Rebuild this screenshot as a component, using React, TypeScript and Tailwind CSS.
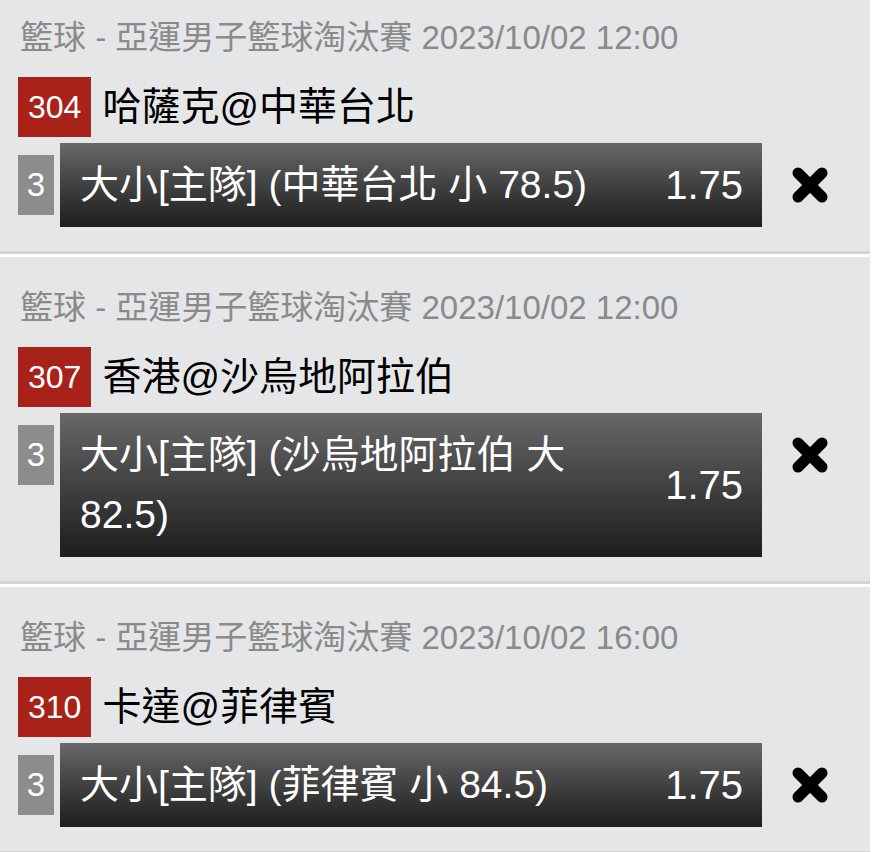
import React from 'react';

type Bet = {
  no: string;
  header: string;
  match: string;
  leg: string;
  pick: string;
  odds: string;
};

const bets: Bet[] = [
  {
    no: '304',
    header: '籃球 - 亞運男子籃球淘汰賽 2023/10/02 12:00',
    match: '哈薩克@中華台北',
    leg: '3',
    pick: '大小[主隊] (中華台北 小 78.5)',
    odds: '1.75',
  },
  {
    no: '307',
    header: '籃球 - 亞運男子籃球淘汰賽 2023/10/02 12:00',
    match: '香港@沙烏地阿拉伯',
    leg: '3',
    pick: '大小[主隊] (沙烏地阿拉伯 大 82.5)',
    odds: '1.75',
  },
  {
    no: '310',
    header: '籃球 - 亞運男子籃球淘汰賽 2023/10/02 16:00',
    match: '卡達@菲律賓',
    leg: '3',
    pick: '大小[主隊] (菲律賓 小 84.5)',
    odds: '1.75',
  },
];

function CloseIcon() {
  return (
    <svg width="36" height="36" viewBox="0 0 36 36">
      <path d="M6 6 L30 30 M30 6 L6 30" stroke="#000" strokeWidth="11" strokeLinecap="round" />
    </svg>
  );
}

function BetCard({ bet, first }: { bet: Bet; first: boolean }) {
  return (
    <div className="mb-[3px]">
      <div
        className={`w-[870px] bg-[#e5e6e8] border-b-[3px] border-[#d3d4d6] pl-[18px] pb-[24px] ${
          first ? 'pt-[20px]' : 'pt-[33px]'
        }`}
      >
        <div className="text-[33px] leading-[36px] text-[#8a8a8a] pl-[2px]">{bet.header}</div>
        <div className="mt-[21px] flex items-center gap-[11px]">
          <div className="h-[60px] px-[10px] bg-[#a8221a] text-white text-[32px] flex items-center">
            {bet.no}
          </div>
          <div className="text-[39px] leading-[60px] text-black">{bet.match}</div>
        </div>
        <div className="mt-[6px] flex items-start">
          <div className="mt-[12px] w-[36px] h-[60px] bg-[#8c8c8c] text-white text-[33px] flex items-center justify-center">
            {bet.leg}
          </div>
          <div className="ml-[6px] w-[702px] bg-linear-to-b from-[#686868] to-[#1e1e1e] flex items-center py-[12px] pl-[20px] pr-[19px] text-white">
            <div className="flex-1 text-[39px] leading-[60px]">{bet.pick}</div>
            <div className="ml-[28px] text-[40px] leading-[60px]">{bet.odds}</div>
          </div>
          <div className="ml-[30px] mt-[24px]">
            <CloseIcon />
          </div>
        </div>
      </div>
    </div>
  );
}

export default function App() {
  return (
    <div
      className="w-[882px] h-[852px] overflow-hidden bg-white"
      style={{ fontFamily: '"Liberation Sans", "Noto Sans CJK TC", sans-serif' }}
    >
      {bets.map((b, i) => (
        <BetCard key={b.no} bet={b} first={i === 0} />
      ))}
    </div>
  );
}
